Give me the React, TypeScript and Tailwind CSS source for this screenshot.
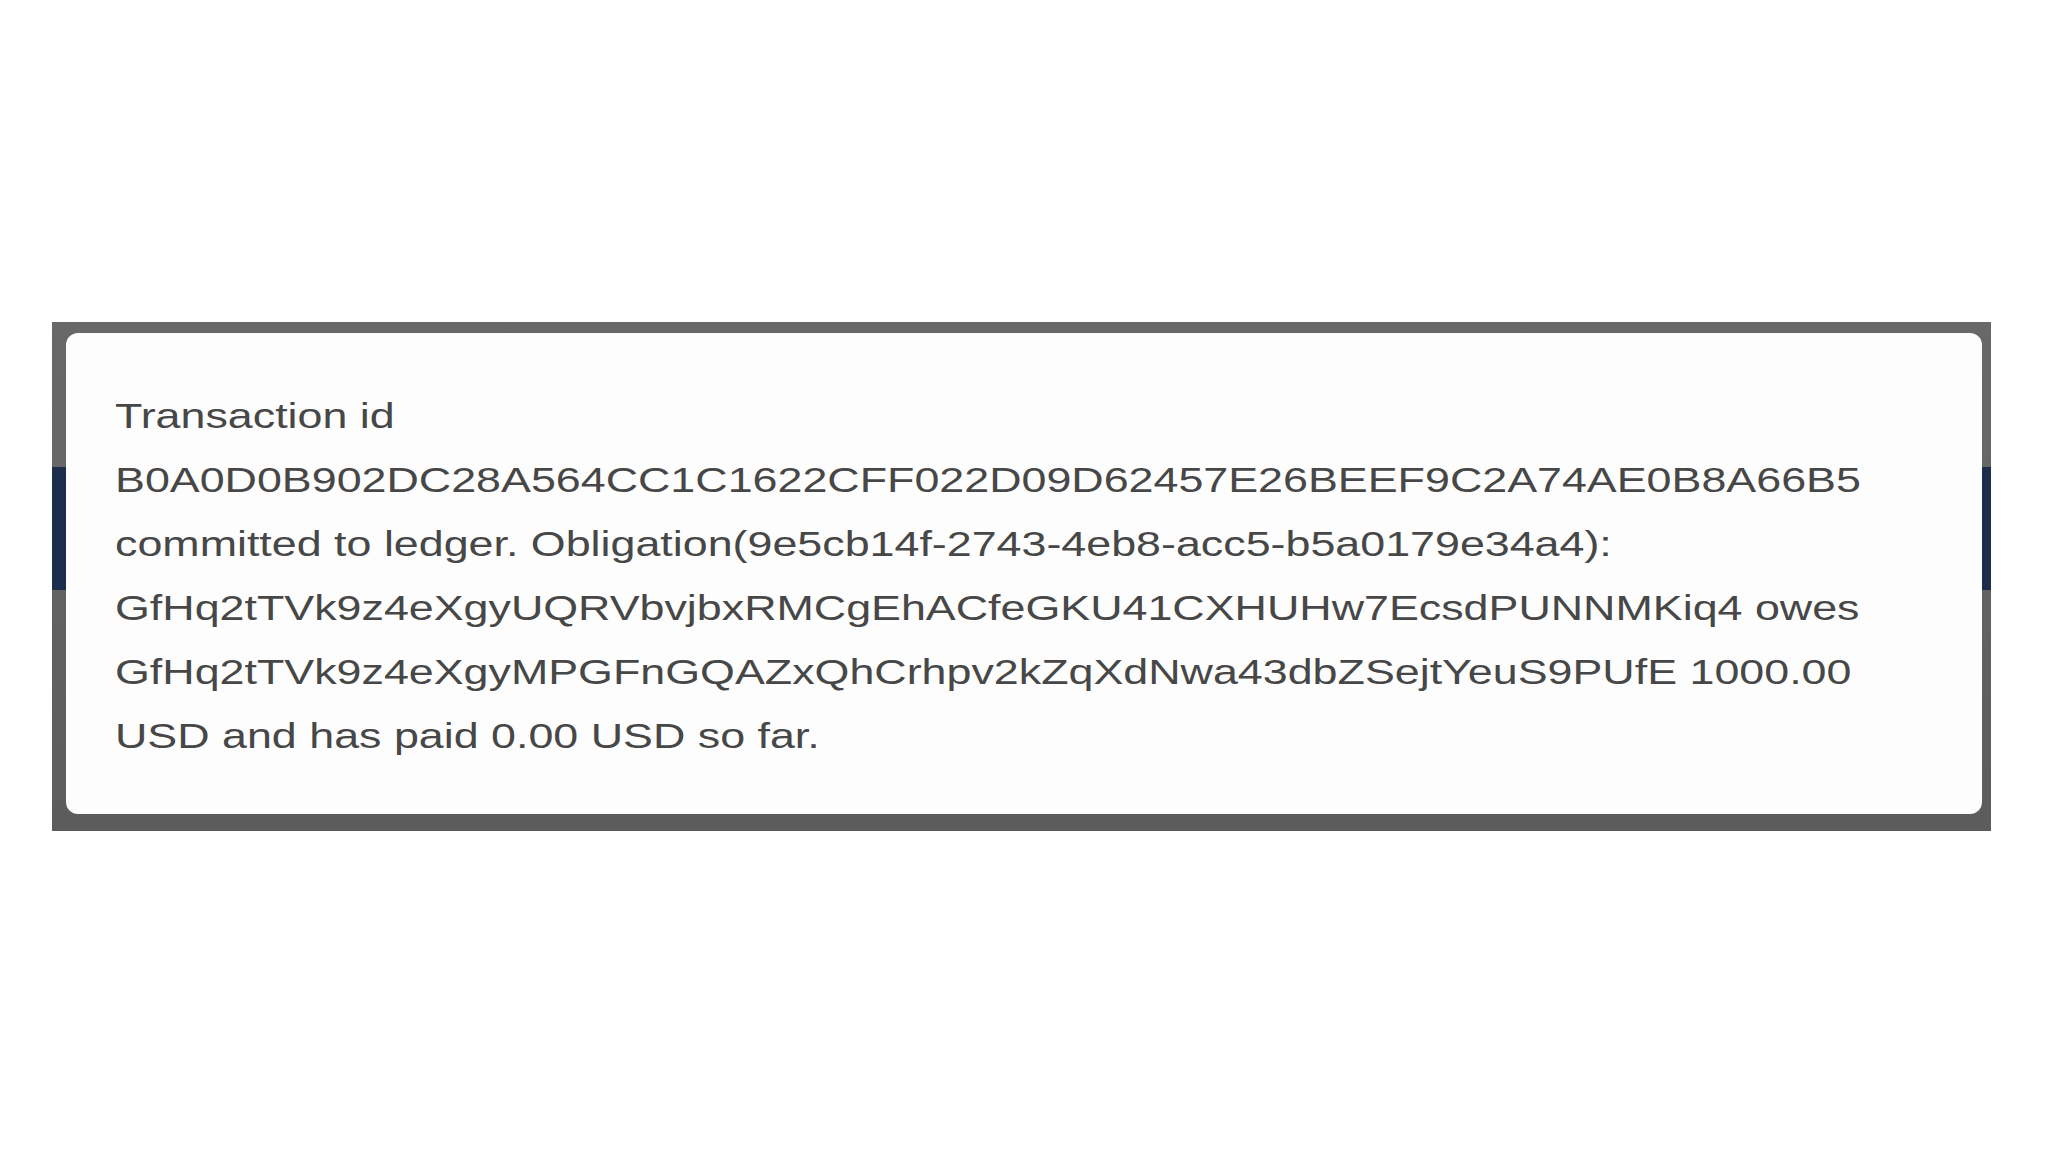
const lines = [
  "Transaction id",
  "B0A0D0B902DC28A564CC1C1622CFF022D09D62457E26BEEF9C2A74AE0B8A66B5",
  "committed to ledger. Obligation(9e5cb14f-2743-4eb8-acc5-b5a0179e34a4):",
  "GfHq2tTVk9z4eXgyUQRVbvjbxRMCgEhACfeGKU41CXHUHw7EcsdPUNNMKiq4 owes",
  "GfHq2tTVk9z4eXgyMPGFnGQAZxQhCrhpv2kZqXdNwa43dbZSejtYeuS9PUfE 1000.00",
  "USD and has paid 0.00 USD so far.",
];

export default function App() {
  return (
    <div className="min-h-screen w-full bg-white pt-[322px] pl-[52px]">
      {/* backdrop frame: grey overlay with the page's navy header bar showing through */}
      <div className="w-[1939px] bg-[linear-gradient(to_bottom,#686868_0px,#666666_145px,#1c2e4b_145px,#1c2e4b_268px,#626262_268px,#5c5c5c_100%)] pt-[11px] pr-[9px] pb-[17px] pl-[14px]">
        <div className="h-[481px] overflow-hidden rounded-[12px] bg-[#fdfdfd] pt-[51px] pl-[49px]">
          <div
            className="w-fit origin-left scale-x-[1.28] text-[35px] leading-[64px] text-[#474747]"
            style={{ fontFamily: '"Liberation Sans", Arial, sans-serif' }}
          >
            {lines.map((line) => (
              <div key={line} className="whitespace-nowrap">
                {line}
              </div>
            ))}
          </div>
        </div>
      </div>
    </div>
  );
}
